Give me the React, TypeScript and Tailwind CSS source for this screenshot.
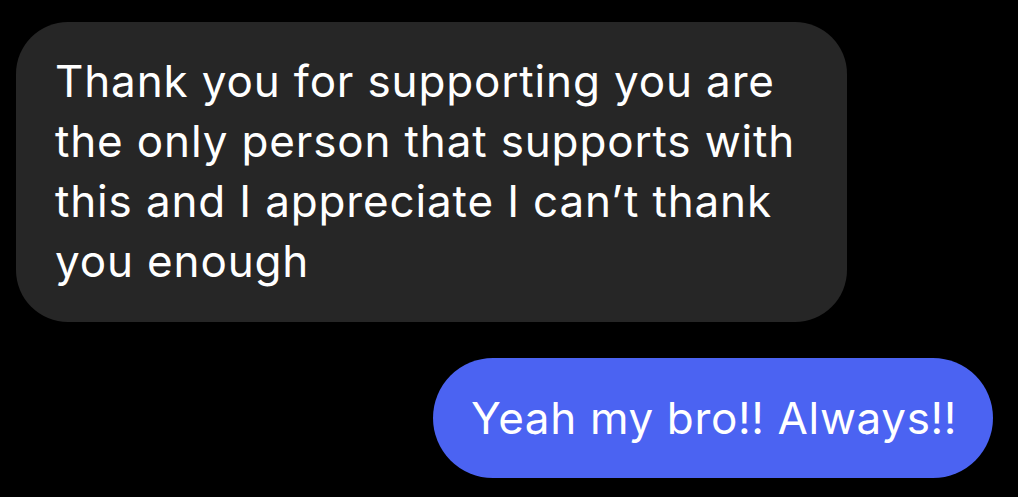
import React from "react";

export default function App() {
  return (
    <div className="w-[1018px] h-[497px] bg-black flex flex-col overflow-hidden" style={{ fontFamily: "Inter, 'Noto Sans', sans-serif" }}>
      <div className="ml-[16px] mt-[22px] w-[831px] h-[300px] rounded-[52px] bg-[#262626] pl-[39px] pt-[29px] text-white text-[44px] leading-[60px] tracking-[0.85px]">
        <div>Thank you for supporting you are</div>
        <div>the only person that supports with</div>
        <div>this and I appreciate I can’t thank</div>
        <div>you enough</div>
      </div>
      <div className="self-end mr-[25px] mt-[36px] w-[560px] h-[120px] rounded-full bg-[#4b63f2] flex items-center pl-[38px] text-white text-[44px] leading-[60px] tracking-[0.65px]">
        Yeah my bro!! Always!!
      </div>
    </div>
  );
}
